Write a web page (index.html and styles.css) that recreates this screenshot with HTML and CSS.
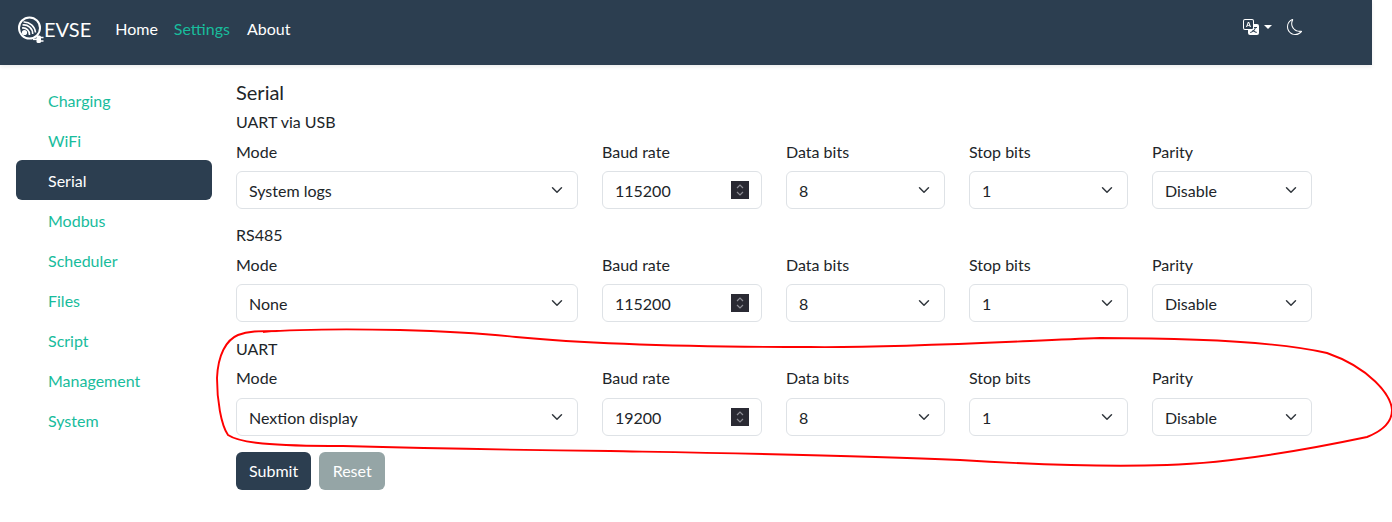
FILE: index.html
```html
<!DOCTYPE html>
<html lang="en">
<head>
  <meta charset="UTF-8">
  <meta name="viewport" content="width=device-width, initial-scale=1.0">
  <title>EVSE Settings</title>
  <link rel="stylesheet" href="styles.css">
</head>
<body>
  <div class="app">
    <nav class="navbar">
      <a class="brand" href="#">
        <svg class="brand-logo" width="28" height="28" viewBox="0 0 28 28" fill="none" stroke="#fff">
          <circle cx="13.5" cy="12" r="10.5" stroke-width="2"/>
          <g stroke-width="1.6">
            <path d="M7.5 6a11.5 11.5 0 0 1 12 10.5"/>
            <path d="M6.5 9a9 9 0 0 1 10.2 9"/>
            <path d="M6 12a6.5 6.5 0 0 1 7.5 7"/>
          </g>
          <circle cx="8.5" cy="16.5" r="2.6" fill="#fff" stroke="none"/>
          <path d="M17 23.3h4" stroke-width="1.6"/>
          <rect x="20.5" y="19.5" width="4.5" height="7.5" rx="1.5" fill="#fff" stroke="none"/>
          <path d="M25 21.5h2.5M25 25h2.5" stroke-width="1.3"/>
        </svg>
        <span>EVSE</span>
      </a>
      <a class="nav-link" href="#">Home</a>
      <a class="nav-link active" href="#">Settings</a>
      <a class="nav-link" href="#">About</a>
      <div class="nav-right">
        <svg class="lang-icon" width="16" height="16" viewBox="0 0 16 16" fill="#fff">
          <path d="M4.545 6.714 4.11 8H3l1.862-5h1.284L8 8H6.833l-.435-1.286H4.545zm1.634-.736L5.5 3.956h-.049l-.679 2.022H6.18z"/>
          <path d="M0 2a2 2 0 0 1 2-2h7a2 2 0 0 1 2 2v3h3a2 2 0 0 1 2 2v7a2 2 0 0 1-2 2H7a2 2 0 0 1-2-2v-3H2a2 2 0 0 1-2-2V2zm2-1a1 1 0 0 0-1 1v7a1 1 0 0 0 1 1h7a1 1 0 0 0 1-1V2a1 1 0 0 0-1-1H2zm7.138 9.995c.193.301.402.583.63.846-.748.575-1.673 1.001-2.768 1.292.178.217.451.635.555.867 1.125-.359 2.08-.844 2.886-1.494.777.665 1.739 1.165 2.93 1.472.133-.254.414-.673.629-.89-1.125-.253-2.057-.694-2.82-1.284.681-.747 1.222-1.651 1.621-2.757H14V8h-3v1.047h.765c-.318.844-.74 1.546-1.272 2.13a6.066 6.066 0 0 1-.415-.492 1.988 1.988 0 0 1-.94.31z"/>
        </svg>
        <span class="caret"></span>
        <svg class="moon-icon" width="16" height="16" viewBox="0 0 16 16" fill="#fff">
          <path d="M6 .278a.768.768 0 0 1 .08.858 7.208 7.208 0 0 0-.878 3.46c0 4.021 3.278 7.277 7.318 7.277.527 0 1.04-.055 1.533-.16a.787.787 0 0 1 .81.316.733.733 0 0 1-.031.893A8.349 8.349 0 0 1 8.344 16C3.734 16 0 12.286 0 7.71 0 4.266 2.114 1.312 5.124.06A.752.752 0 0 1 6 .278zM4.858 1.311A7.269 7.269 0 0 0 1.025 7.71c0 4.02 3.279 7.276 7.319 7.276a7.316 7.316 0 0 0 5.205-2.162c-.337.042-.68.063-1.029.063-4.61 0-8.343-3.714-8.343-8.29 0-1.167.242-2.278.681-3.286z"/>
        </svg>
      </div>
    </nav>

    <div class="layout">
      <aside class="sidebar">
        <a class="side-link" href="#">Charging</a>
        <a class="side-link" href="#">WiFi</a>
        <a class="side-link active" href="#">Serial</a>
        <a class="side-link" href="#">Modbus</a>
        <a class="side-link" href="#">Scheduler</a>
        <a class="side-link" href="#">Files</a>
        <a class="side-link" href="#">Script</a>
        <a class="side-link" href="#">Management</a>
        <a class="side-link" href="#">System</a>
      </aside>

      <main class="content">
        <h5 class="page-title">Serial</h5>

        <form>
          <section class="group">
            <div class="group-title">UART via USB</div>
            <div class="fields">
              <div class="field">
                <label>Mode</label>
                <select class="control"><option>System logs</option></select>
              </div>
              <div class="field">
                <label>Baud rate</label>
                <div class="control number">
                  <input type="text" value="115200">
                  <span class="spinner"><svg width="18" height="18" viewBox="0 0 18 18" fill="none" stroke="#8e8e96" stroke-width="1.2"><path d="M6 7l3-3 3 3M6 11l3 3 3-3"/></svg></span>
                </div>
              </div>
              <div class="field">
                <label>Data bits</label>
                <select class="control"><option>8</option></select>
              </div>
              <div class="field">
                <label>Stop bits</label>
                <select class="control"><option>1</option></select>
              </div>
              <div class="field">
                <label>Parity</label>
                <select class="control"><option>Disable</option></select>
              </div>
            </div>
          </section>

          <section class="group">
            <div class="group-title">RS485</div>
            <div class="fields">
              <div class="field">
                <label>Mode</label>
                <select class="control"><option>None</option></select>
              </div>
              <div class="field">
                <label>Baud rate</label>
                <div class="control number">
                  <input type="text" value="115200">
                  <span class="spinner"><svg width="18" height="18" viewBox="0 0 18 18" fill="none" stroke="#8e8e96" stroke-width="1.2"><path d="M6 7l3-3 3 3M6 11l3 3 3-3"/></svg></span>
                </div>
              </div>
              <div class="field">
                <label>Data bits</label>
                <select class="control"><option>8</option></select>
              </div>
              <div class="field">
                <label>Stop bits</label>
                <select class="control"><option>1</option></select>
              </div>
              <div class="field">
                <label>Parity</label>
                <select class="control"><option>Disable</option></select>
              </div>
            </div>
          </section>

          <section class="group group-uart">
            <div class="group-title">UART</div>
            <div class="fields">
              <div class="field">
                <label>Mode</label>
                <select class="control"><option>Nextion display</option></select>
              </div>
              <div class="field">
                <label>Baud rate</label>
                <div class="control number">
                  <input type="text" value="19200">
                  <span class="spinner"><svg width="18" height="18" viewBox="0 0 18 18" fill="none" stroke="#8e8e96" stroke-width="1.2"><path d="M6 7l3-3 3 3M6 11l3 3 3-3"/></svg></span>
                </div>
              </div>
              <div class="field">
                <label>Data bits</label>
                <select class="control"><option>8</option></select>
              </div>
              <div class="field">
                <label>Stop bits</label>
                <select class="control"><option>1</option></select>
              </div>
              <div class="field">
                <label>Parity</label>
                <select class="control"><option>Disable</option></select>
              </div>
            </div>
          </section>

          <div class="actions">
            <button type="button" class="btn btn-primary">Submit</button>
            <button type="button" class="btn btn-secondary">Reset</button>
          </div>
        </form>
      </main>
    </div>
  </div>

  <!-- hand drawn annotation around the UART row -->
  <svg class="annotation" width="1392" height="522" viewBox="0 0 1392 522" fill="none" stroke="#f00" stroke-width="1.9">
    <path d="M280 331 C258 331 248 331 238 335 C226 340 218 355 217 378 C217 400 221 425 228 435 C240 443 270 446 343 446 C450 449 520 450 610 451 C720 453 850 455 960 460 C1040 465 1110 467 1167 465 C1230 463 1310 449 1367 437 C1385 430 1392 420 1392 410 C1391 395 1370 368 1327 353 C1270 340 1180 338 1100 338 C1000 342 900 348 810 347 C700 347 600 345 516 337 C480 333 440 331 400 330 C350 329 300 329 263 332"/>
  </svg>
</body>
</html>
```

FILE: styles.css
```css
* {
  box-sizing: border-box;
}

body {
  font-family: Lato, "Open Sans", sans-serif;
  font-size: 16px;
  line-height: 24px;
  color: #212529;
  background-color: #fff;
  margin: 0;
  padding: 0;
  height: 100vh;
  overflow: hidden;
}

a {
  text-decoration: none;
}

.app {
  width: 1372px;
}

.navbar {
  display: flex;
  align-items: center;
  height: 65px;
  background-color: #2c3e50;
  box-shadow: 0 2px 4px rgba(0, 0, 0, 0.08);
  padding: 0 0 8px 16px;
}

.brand {
  display: flex;
  align-items: center;
  color: #fff;
  font-size: 20px;
  margin-right: 24px;
}

.brand-logo {
  margin-top: 2px;
}

.nav-link {
  color: #fff;
  margin-right: 16px;
}

.nav-link.active {
  color: #18bc9c;
  margin-right: 17px;
}

.nav-right {
  display: flex;
  align-items: center;
  margin-left: auto;
  margin-right: 69px;
  margin-bottom: 4px;
}

.caret {
  width: 0;
  height: 0;
  margin-left: 5px;
  border-top: 4.8px solid #fff;
  border-left: 4.8px solid transparent;
  border-right: 4.8px solid transparent;
}

.moon-icon {
  margin-left: 15px;
}

.layout {
  display: flex;
}

.sidebar {
  width: 196px;
  margin-left: 16px;
  margin-top: 15px;
  display: flex;
  flex-direction: column;
}

.side-link {
  height: 40px;
  line-height: 42px;
  padding-left: 32px;
  color: #18bc9c;
  border-radius: 6px;
}

.side-link.active {
  background-color: #2c3e50;
  color: #fff;
}

.content {
  width: 1076px;
  margin-left: 24px;
  padding-top: 15px;
}

.page-title {
  font-size: 20px;
  font-weight: 400;
  line-height: 24px;
  margin: 0 0 6px;
}

.group {
  margin-bottom: 14px;
}

.group-title {
  margin-bottom: 6px;
}

.group-uart .group-title {
  padding-top: 1px;
  margin-bottom: 5px;
}

.group-uart .field label {
  margin-bottom: 8px;
}

.fields {
  display: grid;
  grid-template-columns: 342px 160px 159px 159px 160px;
  column-gap: 24px;
}

.field label {
  display: block;
  margin-bottom: 7px;
}

.control {
  display: block;
  width: 100%;
  height: 38px;
  padding: 7px 36px 5px 12px;
  font-family: inherit;
  font-size: 16px;
  line-height: 24px;
  color: #212529;
  background-color: #fff;
  border: 1px solid #dee2e6;
  border-radius: 6px;
}

select.control {
  appearance: none;
  background-image: url("data:image/svg+xml,%3csvg xmlns='http://www.w3.org/2000/svg' viewBox='0 0 16 16'%3e%3cpath fill='none' stroke='%23343a40' stroke-linecap='round' stroke-linejoin='round' stroke-width='2' d='m2 5 6 6 6-6'/%3e%3c/svg%3e");
  background-repeat: no-repeat;
  background-position: right 12px center;
  background-size: 16px 12px;
}

.number {
  display: flex;
  align-items: center;
  padding: 6px 12px;
}

.number input {
  flex: 1;
  width: 100%;
  min-width: 0;
  border: none;
  outline: none;
  padding: 2px 0 0;
  font: inherit;
  color: inherit;
}

.spinner {
  display: block;
  flex: none;
  width: 18px;
  height: 18px;
  background-color: #2a2a33;
}

.spinner svg {
  display: block;
}

.actions {
  display: flex;
  gap: 8px;
  margin-top: 16px;
}

.btn {
  height: 38px;
  padding: 6px 13px;
  font-family: inherit;
  font-size: 16px;
  line-height: 24px;
  color: #fff;
  border: none;
  border-radius: 6px;
  cursor: pointer;
}

.btn-primary {
  background-color: #2c3e50;
}

.btn-secondary {
  min-width: 66px;
  background-color: #95a5a6;
}

.annotation {
  position: absolute;
  top: 0;
  left: 0;
  pointer-events: none;
}
```
